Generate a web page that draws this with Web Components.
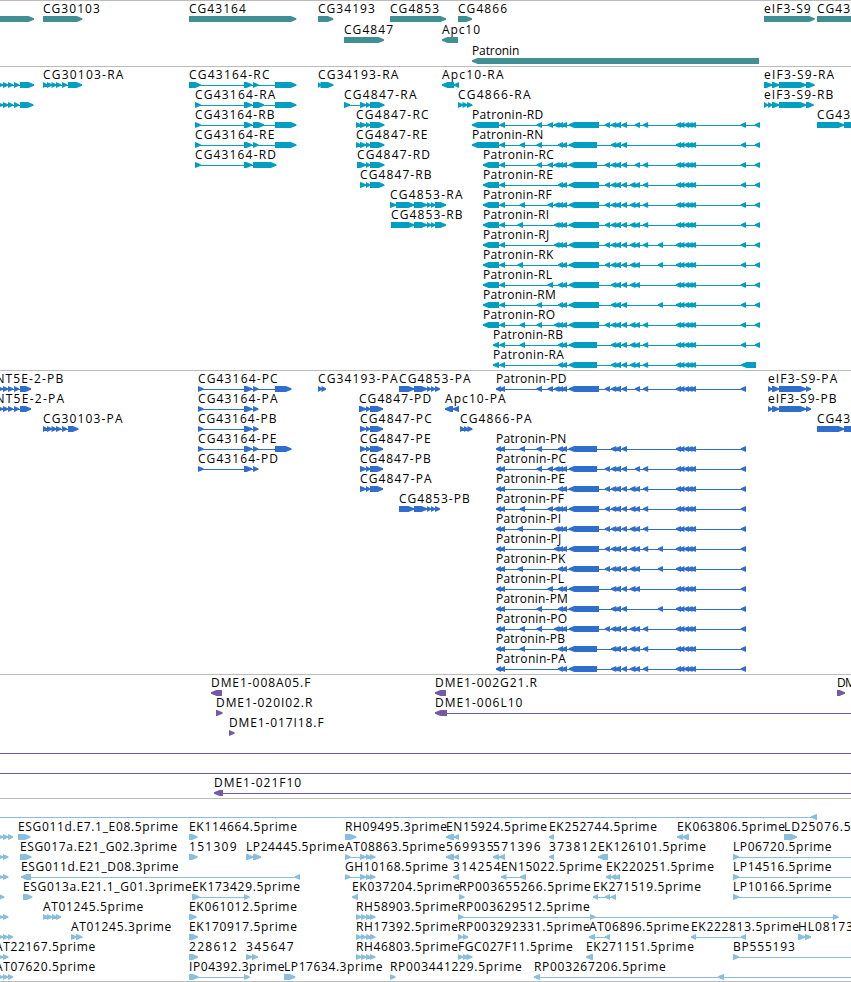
<!DOCTYPE html>
<html lang="en">
<head>
<meta charset="utf-8">
<title>Genome tracks</title>
<style>
html,body{margin:0;background:#fff;overflow:hidden}
</style>
</head>
<body>
<genome-browser></genome-browser>
<script>
// Advance width of each label character, in pixels.
const ADV = {C:8.3,G:9,E:7.2,K:7.7,R:7.9,H:9,A:8.2,P:7,D:8.7,M:10.2,L:6.4,I:3.4,F:6.2,S:6.9,B:7.3,N:8.7,T:7,O:9.5,J:3.6,
  p:7.6,r:5,i:3,m:11,e:7,a:6.6,t:4.5,o:7,n:7.1,c:6.4,d:7.6,'-':7.4,'.':4,'_':6};
const measure = s => [...s].reduce((w, c) => w + (ADV[c] ?? 7.92), 0);

// One feature: label, direction (1 right, -1 left), flat list of exon start/end pairs.
const R = (label, ...ex) => ({label, dir: 1, ex});
const L = (label, ...ex) => ({label, dir: -1, ex});
// Adds options to a feature: x1/x2 for the line's extents, tx for the label's x.
const ext = (f, o) => Object.assign(f, o);

// Exon blocks of the Patronin transcripts.
const BL = {
  f:[519.7,525], i:[517.5,523], d:[536.5,542], e:[547.5,553], g:[554,559.5],
  h:[558,563,562,567], X:[568.7,599], Y:[568.7,597],
  p:[604.8,610], q:[611,616.3,615,621], r:[621.7,627], s:[629.8,635.5], t:[634.8,640],
  u:[643,648.2], v:[657.8,663], w:[675.8,681,679.5,684.5,684,689,687.5,692.5,691,696]
};
const forms = {
  D:'deghXpqrtuw', N:'fdhYqrw', C:'deghYpqrtuw', E:'hXpqrstuw', F:'feghXpqrstuw', I:'ighXpqrstuw',
  J:'ghXpqrstuvw', K:'ihXpqrstvw', L:'ehXqrstw', M:'dhXqrvw', O:'fdghXpqrstuw', B:'fhYqrstuw', A:'hYqrstuw'
};
const body = k => [...forms[k]].flatMap(c => BL[c]);
const mrna = k => {
  const head = 'DN'.includes(k) ? [472,499,499.5,505] : 'AB'.includes(k) ? [493,499,499.5,505] : [483,499,499.5,505];
  const tail = k === 'A' ? [741,756] : [740.8,746,754.8,760];
  return L('Patronin-R' + k, ...head, ...body(k), ...tail);
};
const cds = k => L('Patronin-P' + k, 496,501,500,505, ...body(k), 740.8,746);

const left = end => R('', -3,3,3,8,8,13,14,19,20,end);
const mid47 = [366,370,370,384.3];
const cg47 = (k, ...h) => R('CG4847-R' + k, ...h, ...mid47);
const p47 = (k, x) => R('CG4847-P' + k, x,366,366,370,370,383);
const to = {x2: 852};

const tracks = [
  {color:'#3f8f94', pitch:21, pad:3, rows:[
    [R('',-3,34),R('CG30103',43,82.3),R('CG43164',189,296.3),R('CG34193',318,333.3),R('CG4853',390,446),R('CG4866',458,472),R('eIF3-S9',764,814.7),R('CG43',817,860)],
    [R('CG4847',344,384),L('Apc10',442,458)],
    [L('Patronin',472,759)]
  ]},
  {color:'#009fc1', pitch:20, pad:4, rows:[
    [left(34),R('CG30103-RA',43,47.5,47,52,51.5,56.5,56,61,62,67,68,82),R('CG43164-RC',189,200.7,244,252,253,258.5,275,296.3),R('CG34193-RA',318,321,320.5,333.3),L('Apc10-RA',442,454,454,459),R('eIF3-S9-RA',764,772,772,779,779,806,806,814.5)],
    [left(33.3),R('CG43164-RA',195,200.7,244,252,253,264,275,296.3),R('CG4847-RA',344,350,360,366,...mid47),R('CG4866-RA',458,463,462.5,467.5,467,472.3),R('eIF3-S9-RB',764,768,768,772,772,779,779,806,806,813.6)],
    [R('CG43164-RB',195,200.7,244,252,253,264,275,296.3),cg47('C',356,361,360,366),mrna('D'),R('CG43',817,844,844,860)],
    [R('CG43164-RE',195,200.7,244,252,253,258.5,275,296.3),cg47('E',356,361,360,366),mrna('N')],
    [R('CG43164-RD',195,200.7,244,252,253,276.3),cg47('D',357,366),mrna('C')],
    [cg47('B',360,366),mrna('E')],
    [R('CG4853-RA',390,396,396,414,414,427,427,431,431,435,435,446),mrna('F')],
    [R('CG4853-RB',391,414,414,427,427,431,431,435,435,446),mrna('I')],
    [mrna('J')],[mrna('K')],[mrna('L')],[mrna('M')],[mrna('O')],[mrna('B')],[mrna('A')]
  ]},
  {color:'#306ecd', pitch:20, pad:4, rows:[
    [ext(left(31),{label:'NT5E-2-PB',tx:-4.6}),R('CG43164-PC',198,203.5,244,252,253,258.3,275,291.3),R('CG34193-PA',318,322,321.5,326),R('CG4853-PA',399,414,414,427,427,431,431,435,435,440),cds('D'),R('eIF3-S9-PA',768,772,772,779,779,806,806,811)],
    [ext(left(31),{label:'NT5E-2-PA',tx:-4.6}),R('CG43164-PA',198,203.5,244,252,253,258.3),p47('D',359),L('Apc10-PA',445,453,453,459),R('eIF3-S9-PB',768,772,772,779,779,806,806,811)],
    [R('CG30103-PA',43,47.5,47,52,51.5,56.5,56,61,62,67,68,78.3),R('CG43164-PB',198,203.5,244,252,253,258.3),p47('C',360),R('CG4866-PA',460,464.5,464,468,467.5,472.3),R('CG43',817,844,844,860)],
    [R('CG43164-PE',198,203.5,244,252,253,258.3,275,291.3),p47('E',360),cds('N')],
    [R('CG43164-PD',198,203.5,244,252,253,258.3),p47('B',360),cds('C')],
    [p47('A',360),cds('E')],
    [R('CG4853-PB',399,414,414,427,427,431,431,435,435,440),cds('F')],
    [cds('I')],[cds('J')],[cds('K')],[cds('L')],[cds('M')],[cds('O')],[cds('B')],[cds('A')]
  ]},
  {color:'#7559a8', pitch:20, pad:4, rows:[
    [L('DME1-008A05.F',211,222),L('DME1-002G21.R',435,446),R('DM',837,845)],
    [R('DME1-020I02.R',216,222.5),ext(L('DME1-006L10',435,447),to)],
    [R('DME1-017I18.F',229,234.5)],
    [ext(R(''),{x1:0,x2:852})],[ext(R(''),{x1:0,x2:852})],
    [ext(L('DME1-021F10',214,223),to)]
  ]},
  {color:'#88bfdf', pitch:20, pad:3, rows:[
    [ext(L('',811,817),{x1:0})],
    [R('',-3,3,3,8,8,13),R('ESG011d.E7.1_E08.5prime',18,30.3),R('EK114664.5prime',189,197.5),R('RH09495.3prime',345,356.3),L('EN15924.5prime',446,454,454,459),L('EK252744.5prime',549,554),L('EK063806.5prime',677,683,682,689),R('LD25076.5',784,797)],
    [R('',-3,3,3,8.3),R('ESG017a.E21_G02.3prime',20,31.5),R('151309',189,197.5),R('LP24445.5prime',246,253,253,261),R('AT08863.5prime',345,350.5,360,366,366,371,370,375.3),L('569935',446,454,454,459),L('571396',493,499,499,505),L('373812',549,554),L('EK126101.5prime',598,608),ext(R('LP06720.5prime',733,739),to)],
    [R('',-3,3,3,8.3),L('ESG011d.E21_D08.3prime',21,31,295,300),R('GH10168.5prime',345,350.5,360,366,366,371,370,375.3),L('314254',453,459),L('EN15022.5prime',501,506.5,520,526),L('EK220251.5prime',606,611,611,616,615,620),ext(R('LP14516.5prime',733,739),to)],
    [R('',-3,4.3),R('ESG013a.E21.1_G01.3prime',23,32.3),R('EK173429.5prime',192,199.5,244,249.5),L('EK037204.5prime',352,358),R('RP003655266.5prime',459,464.5),L('EK271519.5prime',593,598,605,610,611,616),ext(R('LP10166.5prime',733,739),to)],
    [R('',-3,3,3,8.3),R('AT01245.5prime',43,48,47,52,52,56.5,56,61),R('EK061012.5prime',189,196.5),R('RH58903.5prime',356,361.5,361,366,366,371,370,375.3),R('RP003629512.5prime',458,463.5,590,595.5,833,838.5)],
    [R('',-3,3,3,8,8,13),R('AT01245.3prime',71,76.5,76,82.3),R('EK170917.5prime',189,198),R('RH17392.5prime',356,361.5,361,366,366,371,370,375.3),R('RP003292331.5prime',458,463,463,468),L('AT06896.5prime',589,595,605,610),L('EK222813.5prime',691,696,741,746),R('HL08173',798,805,805,811)],
    [ext(R('',-3,3,3,8.3),{label:'AT22167.5prime',tx:-5}),R('228612',189,198),R('345647',246,252,252,258),R('RH46803.5prime',356,361.5,361,366,366,371,370,375.3),R('FGC027F11.5prime',458,463,463,468,466.5,472.3),L('EK271151.5prime',586,593),ext(R('BP555193',733,739),to)],
    [ext(R('',-3,3,3,8,8,13),{label:'AT07620.5prime',tx:-5}),R('IP04392.3prime',189,198.5,244,249.5),R('LP17634.3prime',284,295.3),R('RP003441229.5prime',390,395.5),ext(L('RP003267206.5prime',534,540,718,724),to)]
  ]}
];

// An exon is a 6px bar whose last five pixels taper to a point.
function exonPath(a, b, dir) {
  const h = Math.min(5.5, b - a);
  return dir > 0
    ? `M${a} 16H${b-h}L${b} 18.3V19.7L${b-h} 22H${a}Z`
    : `M${b} 16H${a+h}L${a} 18.3V19.7L${a+h} 22H${b}Z`;
}

customElements.define('feature-row', class extends HTMLElement {
  set features(list) {
    const root = this.shadowRoot || this.attachShadow({mode:'open'});
    let out = '';
    for (const f of list) {
      const x1 = f.x1 ?? f.ex[0], x2 = f.x2 ?? f.ex[f.ex.length - 1];
      if (f.ex.length !== 2 || f.x1 !== undefined || f.x2 !== undefined)
        out += `<rect x="${x1}" y="19" width="${x2 - x1}" height="1"/>`;
      let d = '';
      for (let i = 0; i < f.ex.length; i += 2) d += exonPath(f.ex[i], f.ex[i+1], f.dir);
      if (d) out += `<path d="${d}"/>`;
      if (f.label) out += `<text x="${f.tx ?? f.ex[0]}" y="13" textLength="${measure(f.label).toFixed(1)}">${f.label}</text>`;
    }
    root.innerHTML = `<style>
      :host{display:block;height:var(--pitch)}
      svg{display:block;width:100%;height:100%;overflow:visible;fill:var(--ink)}
      text{font:12px "Open Sans","Noto Sans",sans-serif;fill:#000}
    </style><svg>${out}</svg>`;
  }
});

customElements.define('track-band', class extends HTMLElement {
  set track(t) {
    const root = this.attachShadow({mode:'open'});
    root.innerHTML = `<style>
      :host{display:block;box-sizing:border-box;background:linear-gradient(#bbb,#bbb) 0 0/100% 1px no-repeat;
        --ink:${t.color};--pitch:${t.pitch}px;padding-bottom:${t.pad}px}
    </style>`;
    for (const r of t.rows) {
      const el = document.createElement('feature-row');
      el.features = r;
      root.append(el);
    }
  }
});

customElements.define('genome-browser', class extends HTMLElement {
  connectedCallback() {
    const root = this.attachShadow({mode:'open'});
    root.innerHTML = `<style>
      :host{display:flex;flex-direction:column;width:851px;height:982px;overflow:hidden;background:#fff}
      hr{margin:0;border:0;height:1px;background:#bbb;flex:none}
      track-band{flex:none}
    </style>`;
    for (const t of tracks) {
      const el = document.createElement('track-band');
      el.track = t;
      root.append(el);
    }
    root.append(document.createElement('hr'));
  }
});
</script>
</body>
</html>
